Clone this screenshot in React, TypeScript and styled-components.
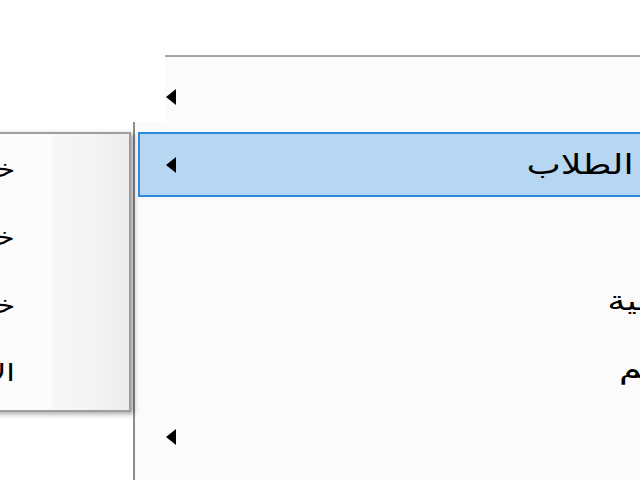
import styled, { createGlobalStyle } from "styled-components";

const GlobalStyle = createGlobalStyle`
  html, body {
    margin: 0;
    padding: 0;
    background: #ffffff;
    overflow: hidden;
  }
`;

const Screen = styled.div`
  position: relative;
  width: 640px;
  height: 480px;
  overflow: hidden;
  background: #ffffff;
  font-family: "Segoe UI", Tahoma, "DejaVu Sans", sans-serif;
  color: #000000;
`;

const MainMenu = styled.div`
  position: absolute;
  left: 133px;
  top: 55px;
  width: 640px;
  height: 460px;
  box-sizing: border-box;
  direction: rtl;
  padding-top: 7px;
  font-size: 28px;
  background: #fbfbfb;
  border-top: 2px solid #a5a5a5;
  border-left: 2px solid #8c8c8c;
  clip-path: polygon(32px 0, 100% 0, 100% 100%, 0 100%, 0 67px, 32px 67px);
`;

const MenuItem = styled.div<{ $active?: boolean }>`
  display: flex;
  align-items: center;
  justify-content: space-between;
  box-sizing: border-box;
  height: 65px;
  margin: 0 0 3px 3px;
  padding: 0 26px 0 25px;
  border: 2px solid ${(p) => (p.$active ? "#2f88dc" : "transparent")};
  background: ${(p) => (p.$active ? "#b7d6f2" : "transparent")};
  white-space: nowrap;
`;

const Label = styled.span`
  display: inline-block;
  line-height: 1;
  transform: scaleX(1.3);
  transform-origin: right center;
`;

const SubMenu = styled.div`
  position: absolute;
  left: -250px;
  top: 132px;
  width: 381px;
  height: 280px;
  box-sizing: border-box;
  direction: rtl;
  padding-top: 1px;
  font-size: 24px;
  border: 2px solid #9e9e9e;
  background: linear-gradient(
    to left,
    #ececec 0px,
    #f4f4f4 40px,
    #f7f7f7 76px,
    #fcfcfc 77px,
    #fcfcfc 100%
  );
  box-shadow: 3px 2px 5px rgba(0, 0, 0, 0.35);
  z-index: 2;
`;

const SubItem = styled.div`
  display: flex;
  align-items: center;
  height: 68px;
  padding-right: 114px;
  white-space: nowrap;
`;

function Arrow() {
  return (
    <svg width="12" height="18" viewBox="0 0 12 18">
      <polygon points="11,1 11,17 1,9" fill="#000000" />
    </svg>
  );
}

const mainItems = [
  { label: "عرض", arrow: true },
  { label: "حساب الطلاب", arrow: true, active: true },
  { label: "بحث", arrow: false },
  { label: "الأكاديمية", arrow: false },
  { label: "المفاهيم", arrow: false },
  { label: "أدوات", arrow: true },
];

const subItems = ["خصائص الملف", "خيارات العرض", "خروج من البرنامج", "الإعدادات"];

export default function App() {
  return (
    <Screen>
      <GlobalStyle />
      <MainMenu>
        {mainItems.map((item) => (
          <MenuItem key={item.label} $active={item.active}>
            <Label>{item.label}</Label>
            {item.arrow ? <Arrow /> : <span />}
          </MenuItem>
        ))}
      </MainMenu>
      <SubMenu>
        {subItems.map((s) => (
          <SubItem key={s}>
            <Label>{s}</Label>
          </SubItem>
        ))}
      </SubMenu>
    </Screen>
  );
}
